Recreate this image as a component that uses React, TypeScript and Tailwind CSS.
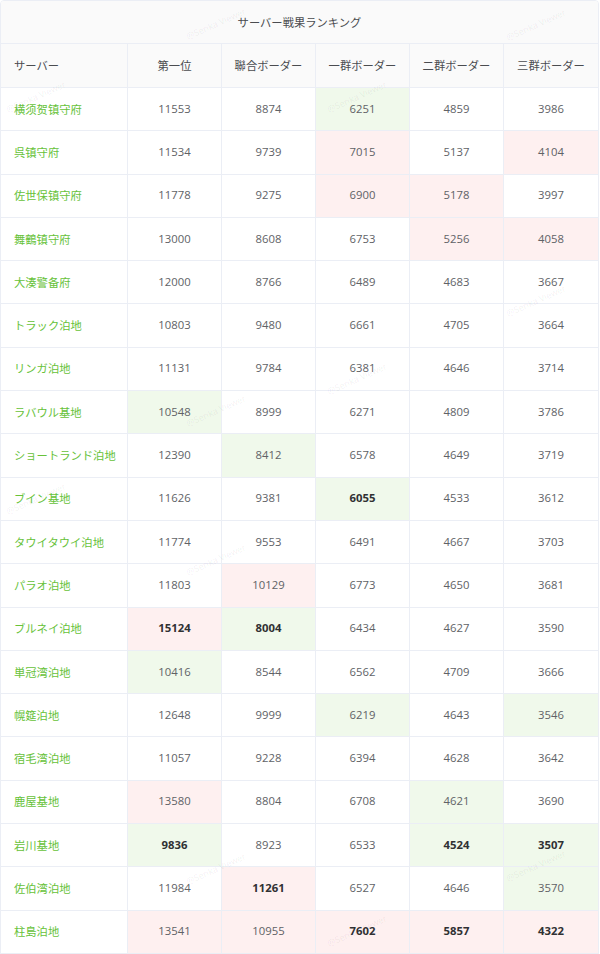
const columns = ["第一位", "聯合ボーダー", "一群ボーダー", "二群ボーダー", "三群ボーダー"];

// g = green cell, r = red cell, uppercase = bold
type Mark = "" | "g" | "r" | "G" | "R";

const rows: { name: string; values: [number, Mark][] }[] = [
  { name: "横须贺镇守府", values: [[11553, ""], [8874, ""], [6251, "g"], [4859, ""], [3986, ""]] },
  { name: "呉镇守府", values: [[11534, ""], [9739, ""], [7015, "r"], [5137, ""], [4104, "r"]] },
  { name: "佐世保镇守府", values: [[11778, ""], [9275, ""], [6900, "r"], [5178, "r"], [3997, ""]] },
  { name: "舞鶴镇守府", values: [[13000, ""], [8608, ""], [6753, ""], [5256, "r"], [4058, "r"]] },
  { name: "大湊警备府", values: [[12000, ""], [8766, ""], [6489, ""], [4683, ""], [3667, ""]] },
  { name: "トラック泊地", values: [[10803, ""], [9480, ""], [6661, ""], [4705, ""], [3664, ""]] },
  { name: "リンガ泊地", values: [[11131, ""], [9784, ""], [6381, ""], [4646, ""], [3714, ""]] },
  { name: "ラバウル基地", values: [[10548, "g"], [8999, ""], [6271, ""], [4809, ""], [3786, ""]] },
  { name: "ショートランド泊地", values: [[12390, ""], [8412, "g"], [6578, ""], [4649, ""], [3719, ""]] },
  { name: "ブイン基地", values: [[11626, ""], [9381, ""], [6055, "G"], [4533, ""], [3612, ""]] },
  { name: "タウイタウイ泊地", values: [[11774, ""], [9553, ""], [6491, ""], [4667, ""], [3703, ""]] },
  { name: "パラオ泊地", values: [[11803, ""], [10129, "r"], [6773, ""], [4650, ""], [3681, ""]] },
  { name: "ブルネイ泊地", values: [[15124, "R"], [8004, "G"], [6434, ""], [4627, ""], [3590, ""]] },
  { name: "単冠湾泊地", values: [[10416, "g"], [8544, ""], [6562, ""], [4709, ""], [3666, ""]] },
  { name: "幌筵泊地", values: [[12648, ""], [9999, ""], [6219, "g"], [4643, ""], [3546, "g"]] },
  { name: "宿毛湾泊地", values: [[11057, ""], [9228, ""], [6394, ""], [4628, ""], [3642, ""]] },
  { name: "鹿屋基地", values: [[13580, "r"], [8804, ""], [6708, ""], [4621, "g"], [3690, ""]] },
  { name: "岩川基地", values: [[9836, "G"], [8923, ""], [6533, ""], [4524, "G"], [3507, "G"]] },
  { name: "佐伯湾泊地", values: [[11984, ""], [11261, "R"], [6527, ""], [4646, ""], [3570, "g"]] },
  { name: "柱島泊地", values: [[13541, "r"], [10955, "r"], [7602, "R"], [5857, "R"], [4322, "R"]] },
];

// faint "@Senka Viewer" watermark spots
const marks = [
  [35, 96], [356, 96], [215, 23], [535, 24],
  [356, 378], [35, 498], [215, 410], [215, 559], [535, 300],
  [215, 868], [535, 865], [356, 930],
];

function cellClass(m: Mark) {
  if (m === "g" || m === "G") return "bg-[#f0f9eb]";
  if (m === "r" || m === "R") return "bg-[#fef0f0]";
  return "bg-white";
}

export default function App() {
  return (
    <div className="w-[600px] h-[954px] overflow-hidden bg-white">
      <div
        className="relative w-[599px] border border-[#ebeef5] rounded-t-[4px] overflow-hidden text-[11.3px] text-[#606266]"
        style={{ fontFamily: '"Noto Sans CJK JP", "Noto Sans CJK SC", "Noto Sans", sans-serif' }}
      >
        {/* title */}
        <div className="h-[43px] flex items-center justify-center bg-[#fafafa] border-b border-[#ebeef5] text-[#4a4c50]">
          サーバー戦果ランキング
        </div>

        {/* header */}
        <div className="grid grid-cols-[127px_repeat(5,1fr)] h-[44px] bg-[#fafafa] border-b border-[#ebeef5] text-[#4a4c50]">
          <div className="flex items-center pl-[13px] border-r border-[#ebeef5]">サーバー</div>
          {columns.map((c, i) => (
            <div
              key={c}
              className={`flex items-center justify-center ${i < 4 ? "border-r border-[#ebeef5]" : ""}`}
            >
              {c}
            </div>
          ))}
        </div>

        {/* body */}
        {rows.map((row) => (
          <div
            key={row.name}
            className="grid grid-cols-[127px_repeat(5,1fr)] h-[43.3px] border-b border-[#ebeef5]"
          >
            <div className="flex items-center pl-[13px] border-r border-[#ebeef5] bg-white text-[#67c23a] whitespace-nowrap">
              {row.name}
            </div>
            {row.values.map(([v, m], i) => (
              <div
                key={i}
                className={`flex items-center justify-center ${cellClass(m)} ${
                  m === "G" || m === "R" ? "font-bold text-[#303133]" : ""
                } ${i < 4 ? "border-r border-[#ebeef5]" : ""}`}
                style={{ fontFamily: '"Open Sans", "Noto Sans", sans-serif' }}
              >
                {v}
              </div>
            ))}
          </div>
        ))}

        {/* watermark */}
        {marks.map(([x, y], i) => (
          <div
            key={i}
            className="absolute pointer-events-none text-[9px] text-black/[0.07] whitespace-nowrap -rotate-[24deg]"
            style={{ left: x - 32, top: y - 7, fontFamily: '"Open Sans", sans-serif' }}
          >
            @Senka Viewer
          </div>
        ))}
      </div>
    </div>
  );
}
